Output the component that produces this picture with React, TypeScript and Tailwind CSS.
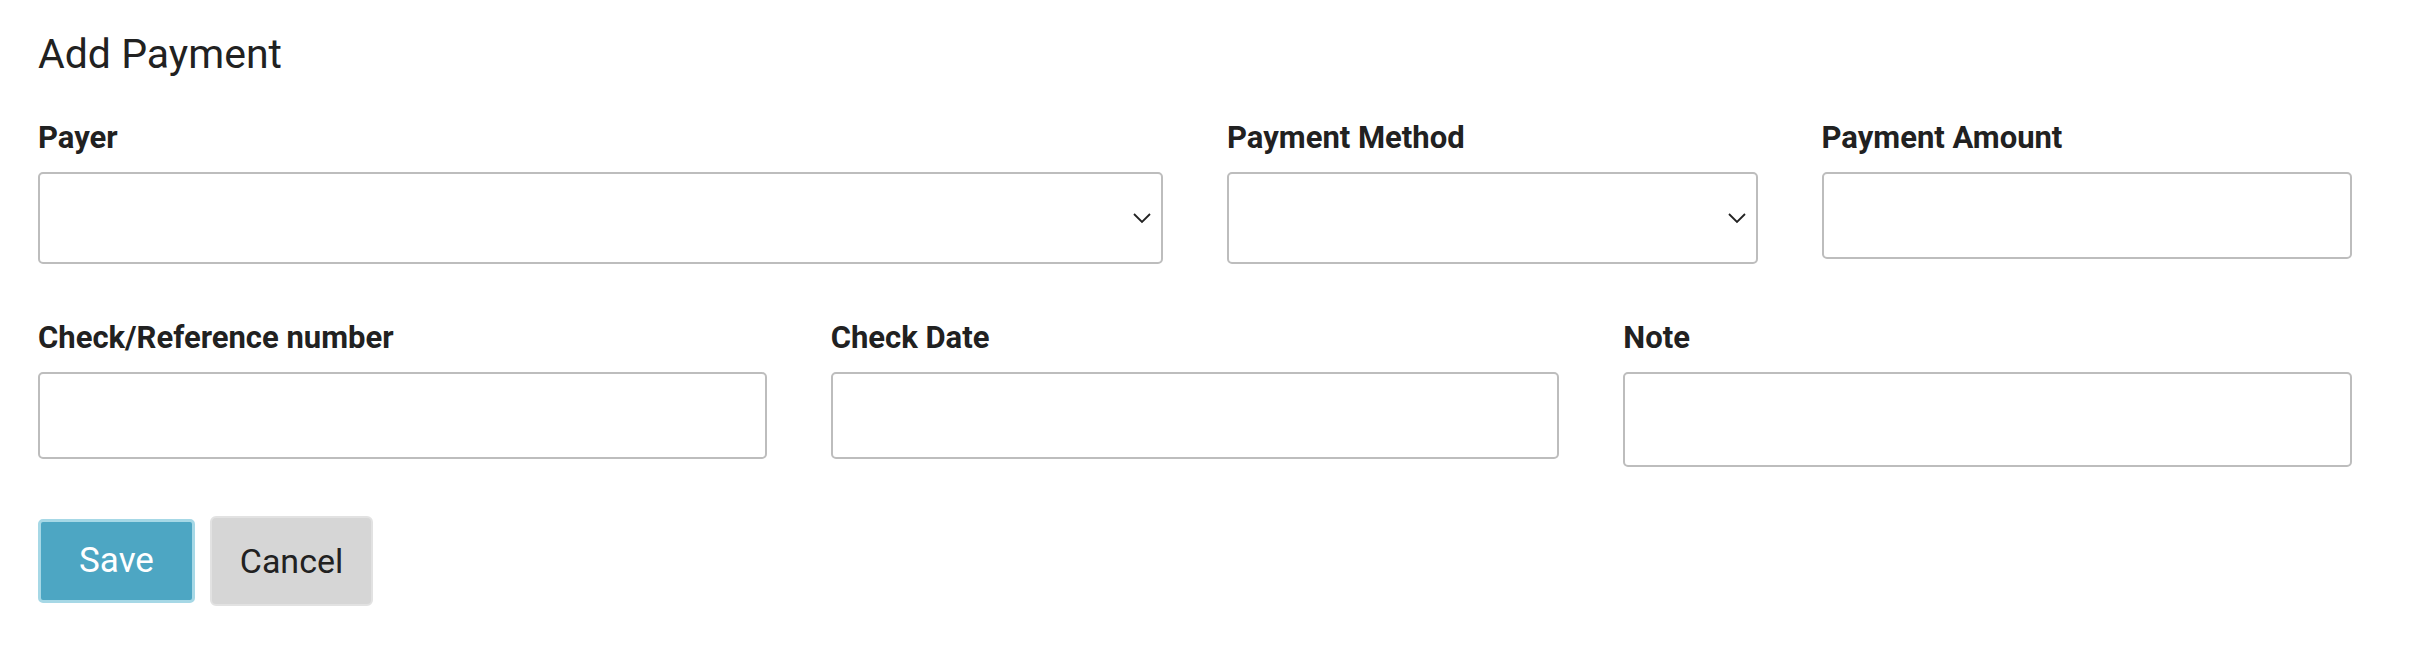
import React from 'react';

function Chevron() {
  return (
    <svg width="18" height="11" viewBox="0 0 18 11" fill="none" className="absolute right-[10px] top-1/2 -translate-y-1/2">
      <polyline points="1,1.5 9,9.5 17,1.5" stroke="#222" strokeWidth="1.8" />
    </svg>
  );
}

function Label({ children }: { children: React.ReactNode }) {
  return (
    <label className="block text-[31px] leading-[36px] font-bold text-[#212121] mb-[16px]">{children}</label>
  );
}

function SelectBox() {
  return (
    <div className="relative h-[92px] rounded-[5px] border-2 border-[#bdbdbd] bg-white">
      <Chevron />
    </div>
  );
}

function InputBox({ tall = false }: { tall?: boolean }) {
  return (
    <div
      className={
        tall
          ? 'h-[95px] rounded-[5px] border-2 border-[#bdbdbd] bg-white'
          : 'h-[87px] rounded-[5px] border-2 border-[#bdbdbd] bg-white'
      }
    />
  );
}

export default function App() {
  return (
    <div className="min-h-[648px] bg-white pl-[38px] pr-[62px] pt-[29px] font-['Roboto',sans-serif] text-[#212121]">
      <h1 className="text-[41px] leading-[50px] font-normal">Add Payment</h1>

      <div className="mt-[41px] grid grid-cols-12 gap-x-[64px] items-start">
        <div className="col-span-6">
          <Label>Payer</Label>
          <SelectBox />
        </div>
        <div className="col-span-3">
          <Label>Payment Method</Label>
          <SelectBox />
        </div>
        <div className="col-span-3">
          <Label>Payment Amount</Label>
          <InputBox />
        </div>
      </div>

      <div className="mt-[56px] grid grid-cols-12 gap-x-[64px] items-start">
        <div className="col-span-4">
          <Label>Check/Reference number</Label>
          <InputBox />
        </div>
        <div className="col-span-4">
          <Label>Check Date</Label>
          <InputBox />
        </div>
        <div className="col-span-4">
          <Label>Note</Label>
          <InputBox tall />
        </div>
      </div>

      <div className="mt-[49px] flex items-center gap-[15px]">
        <button className="h-[84px] w-[157px] rounded-[5px] border-[3px] border-[#a6d8e6] bg-[#4da6c3] text-[35px] text-white">
          Save
        </button>
        <button className="h-[90px] w-[163px] rounded-[6px] border-2 border-[#e2e2e2] bg-[#d6d6d6] text-[34px] text-[#212121]">
          Cancel
        </button>
      </div>
    </div>
  );
}
